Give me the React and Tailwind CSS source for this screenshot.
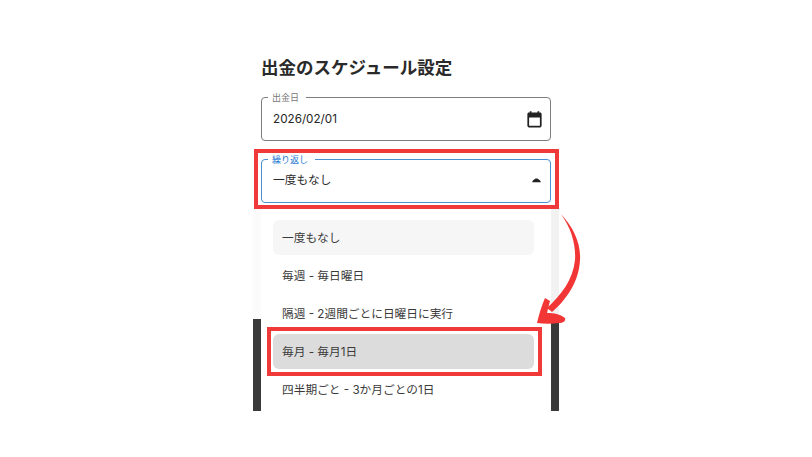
import React from 'react';

const options = [
  { label: '一度もなし', className: 'bg-[#f6f6f6]' },
  { label: '毎週 - 毎日曜日', className: '' },
  { label: '隔週 - 2週間ごとに日曜日に実行', className: '' },
  { label: '毎月 - 毎月1日', className: 'bg-[#dcdcdc]' },
  { label: '四半期ごと - 3か月ごとの1日', className: '' },
];

const Field = ({ label, active, children }) => (
  <div
    className={`relative flex h-[44px] items-center justify-between rounded-[4px] border pl-[11px] pr-[7px] ${
      active ? 'border-[#4a8fd0]' : 'border-[#7d7d7d]'
    }`}
  >
    <span
      className={`absolute left-[6px] top-[-6px] bg-white pl-[4px] pr-[7px] text-[9px] leading-[11px] ${
        active ? 'text-[#1976d2]' : 'text-[#777777]'
      }`}
    >
      {label}
    </span>
    {children}
  </div>
);

const App = () => {
  return (
    <div className='relative h-[457px] w-[812px] overflow-hidden bg-white font-["Inter","Noto_Sans_CJK_JP",sans-serif]'>
      <div className="ml-[253px] w-[306px] pt-[56px]">
        <div className="px-[8px]">
          <h2 className="text-[17.5px] font-bold leading-[24px] text-[#2a2a2a]">
            出金のスケジュール設定
          </h2>
          <div className="mt-[17px]">
            <Field label="出金日">
              <span className="mt-[1px] text-[11.7px] text-[#262626]">2026/02/01</span>
              <svg className="-mr-[1px] mt-[1px] h-[19px] w-[19px] text-[#222222]" viewBox="0 0 24 24" fill="currentColor">
                <path d="M19 3h-1V1.5h-2.2V3H8.200V1.500H6V3H5C3.800 3 3 3.900 3 5v15c0 1.100.8 2 2 2h14c1.100 0 2-.9 2-2V5c0-1.100-.9-2-2-2zm-.2 16.800H5.200V9.500h13.600v10.300z" />
              </svg>
            </Field>
          </div>
          <div className="mt-[18px]">
            <Field label="繰り返し" active>
              <span className="mb-[1px] text-[11.7px] text-[#2a2a2a]">一度もなし</span>
              <svg className="mb-[4px] h-[13px] w-[13px] text-[#222222]" viewBox="0 0 24 24" fill="currentColor">
                <path d="M4 17c0-2 4-7 8-7s8 5 8 7z" />
              </svg>
            </Field>
          </div>
        </div>

        {/* dark page content showing behind the open menu */}
        <div className="relative mt-[6px] h-[202px] overflow-hidden">
          <div className="h-[110px] bg-linear-to-r from-[#fbfbfb] to-[#f2f2f2]"></div>
          <div className="h-[92px] bg-[#3a3a3a]"></div>
          <div className="absolute left-[8px] right-[8px] top-0 h-[202px] bg-white px-[12px] pt-[11px]">
            <ul className="mr-[5px] flex flex-col gap-[3px]">
              {options.map((option) => (
                <li
                  key={option.label}
                  className={`flex h-[35px] items-center rounded-[6px] pl-[9px] pt-[2px] text-[11.7px] text-[#3a3a3a] ${option.className}`}
                >
                  {option.label}
                </li>
              ))}
            </ul>
          </div>
        </div>
      </div>

      {/* annotations drawn over the screenshot */}
      <div className="absolute left-[254px] top-[149px] h-[60px] w-[305px] border-[4px] border-[#f03a3a]"></div>
      <div className="absolute left-[267px] top-[327px] h-[49px] w-[275px] border-[4px] border-[#f03a3a]"></div>
      <svg className="absolute left-[530px] top-[208px]" width="60" height="125" viewBox="0 0 60 125">
        <path
          d="M31 6 C44 20 51 36 50 52 C49 74 36 92 22 104 L17 100 C31 87 43 72 45 52 C46 36 41 20 31 6 Z"
          fill="#f23636"
        />
        <path
          d="M15 90 L20 93 L17 105 C24 105 30 106 35 110 C36 113 33 115 29 115 C22 116 14 116 7 115 C9 106 12 97 15 90 Z"
          fill="#f23636"
        />
      </svg>
    </div>
  );
};

export default App;
